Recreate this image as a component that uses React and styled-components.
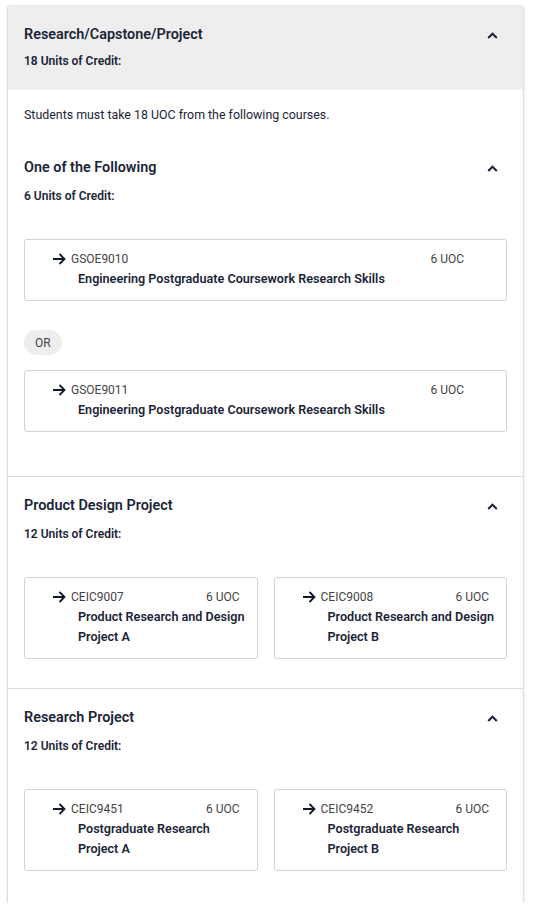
import styled, { createGlobalStyle } from "styled-components";

const GlobalStyle = createGlobalStyle`
  body {
    margin: 0;
    background: #ffffff;
    font-family: Roboto, "Liberation Sans", sans-serif;
    color: #1b2437;
  }
`;

const colors = {
  text: "#1b2437",
  muted: "#444444",
  headerBg: "#eeeeee",
  border: "#d3d3d3",
  divider: "#dcdcdc",
};

const Card = styled.div`
  margin: 6px 0 0 8px;
  width: 515px;
  background: #ffffff;
  box-shadow: 0 1px 3px rgba(0, 0, 0, 0.25), 0 0 1px rgba(0, 0, 0, 0.2);
`;

const Header = styled.div`
  background: ${colors.headerBg};
  padding: 19px 16px 21px;
`;

const TitleRow = styled.div`
  display: flex;
  align-items: center;
  justify-content: space-between;
  padding-right: 9px;
`;

const Title = styled.h2`
  margin: 0;
  font-size: 14.4px;
  line-height: 20px;
  font-weight: 600;
  color: ${colors.text};
`;

const Units = styled.div`
  margin-top: 8px;
  font-size: 12px;
  line-height: 16px;
  font-weight: 600;
  color: ${colors.text};
`;

const Intro = styled.p`
  margin: 0;
  padding: 16px 16px 0;
  font-size: 12.4px;
  line-height: 18px;
  color: ${colors.text};
`;

const Section = styled.section`
  padding: ${({ first }) => (first ? "34px" : "19px")} 16px
    ${({ first, last }) => (first ? "44px" : last ? "32px" : "29px")};
  border-bottom: ${({ last }) => (last ? "none" : `1px solid ${colors.divider}`)};

  ${Units} {
    margin-top: 10px;
  }
`;

const CourseList = styled.div`
  margin-top: 35px;
  display: flex;
  flex-direction: column;
  align-items: flex-start;
  gap: 15px;
`;

const CourseGrid = styled.div`
  margin-top: 35px;
  display: grid;
  grid-template-columns: 1fr 1fr;
  gap: 16px;
`;

const OrChip = styled.span`
  display: inline-flex;
  align-items: center;
  height: 25px;
  padding: 0 11px;
  margin-top: 14px;
  border-radius: 13px;
  background: ${colors.headerBg};
  font-size: 12px;
  color: ${colors.muted};
`;

const CourseBox = styled.div`
  box-sizing: border-box;
  width: 100%;
  border: 1px solid ${colors.border};
  border-radius: 3px;
  padding: 11px 8px 11px 27px;
  display: flex;
  align-items: flex-start;
  gap: 5px;
`;

const ArrowWrap = styled.span`
  display: flex;
  align-items: center;
  height: 16px;
`;

const CourseBody = styled.div`
  flex: 1;
`;

const CodeRow = styled.div`
  display: flex;
  justify-content: space-between;
  padding-right: ${({ wide }) => (wide ? "34px" : "9px")};
  font-size: 12px;
  line-height: 16px;
  color: ${colors.muted};
`;

const CourseTitle = styled.div`
  margin-top: 2px;
  padding-left: 7px;
  font-size: 12.6px;
  line-height: 20px;
  font-weight: 600;
  color: ${colors.text};
`;

const Chevron = () => (
  <svg width="11" height="7" viewBox="0 0 11 7">
    <polyline
      points="1.2,6 5.5,1.7 9.8,6"
      fill="none"
      stroke={colors.text}
      strokeWidth="2"
    />
  </svg>
);

const Arrow = () => (
  <svg width="14" height="12" viewBox="0 0 14 12">
    <path
      d="M1 6 H12.5 M7.5 1 L12.5 6 L7.5 11"
      fill="none"
      stroke="#111827"
      strokeWidth="1.8"
    />
  </svg>
);

const Course = ({ code, title, wide }) => (
  <CourseBox>
    <ArrowWrap>
      <Arrow />
    </ArrowWrap>
    <CourseBody>
      <CodeRow wide={wide}>
        <span>{code}</span>
        <span>6 UOC</span>
      </CodeRow>
      <CourseTitle>{title}</CourseTitle>
    </CourseBody>
  </CourseBox>
);

const SectionHead = ({ title, units }) => (
  <>
    <TitleRow>
      <Title>{title}</Title>
      <Chevron />
    </TitleRow>
    <Units>{units}</Units>
  </>
);

const App = () => {
  return (
    <>
      <GlobalStyle />
      <Card>
        <Header>
          <SectionHead
            title="Research/Capstone/Project"
            units="18 Units of Credit:"
          />
        </Header>
        <Intro>Students must take 18 UOC from the following courses.</Intro>

        <Section first>
          <SectionHead title="One of the Following" units="6 Units of Credit:" />
          <CourseList>
            <Course
              wide
              code="GSOE9010"
              title="Engineering Postgraduate Coursework Research Skills"
            />
            <OrChip>OR</OrChip>
            <Course
              wide
              code="GSOE9011"
              title="Engineering Postgraduate Coursework Research Skills"
            />
          </CourseList>
        </Section>

        <Section>
          <SectionHead
            title="Product Design Project"
            units="12 Units of Credit:"
          />
          <CourseGrid>
            <Course code="CEIC9007" title="Product Research and Design Project A" />
            <Course code="CEIC9008" title="Product Research and Design Project B" />
          </CourseGrid>
        </Section>

        <Section last>
          <SectionHead title="Research Project" units="12 Units of Credit:" />
          <CourseGrid>
            <Course code="CEIC9451" title="Postgraduate Research Project A" />
            <Course code="CEIC9452" title="Postgraduate Research Project B" />
          </CourseGrid>
        </Section>
      </Card>
    </>
  );
};

export default App;
